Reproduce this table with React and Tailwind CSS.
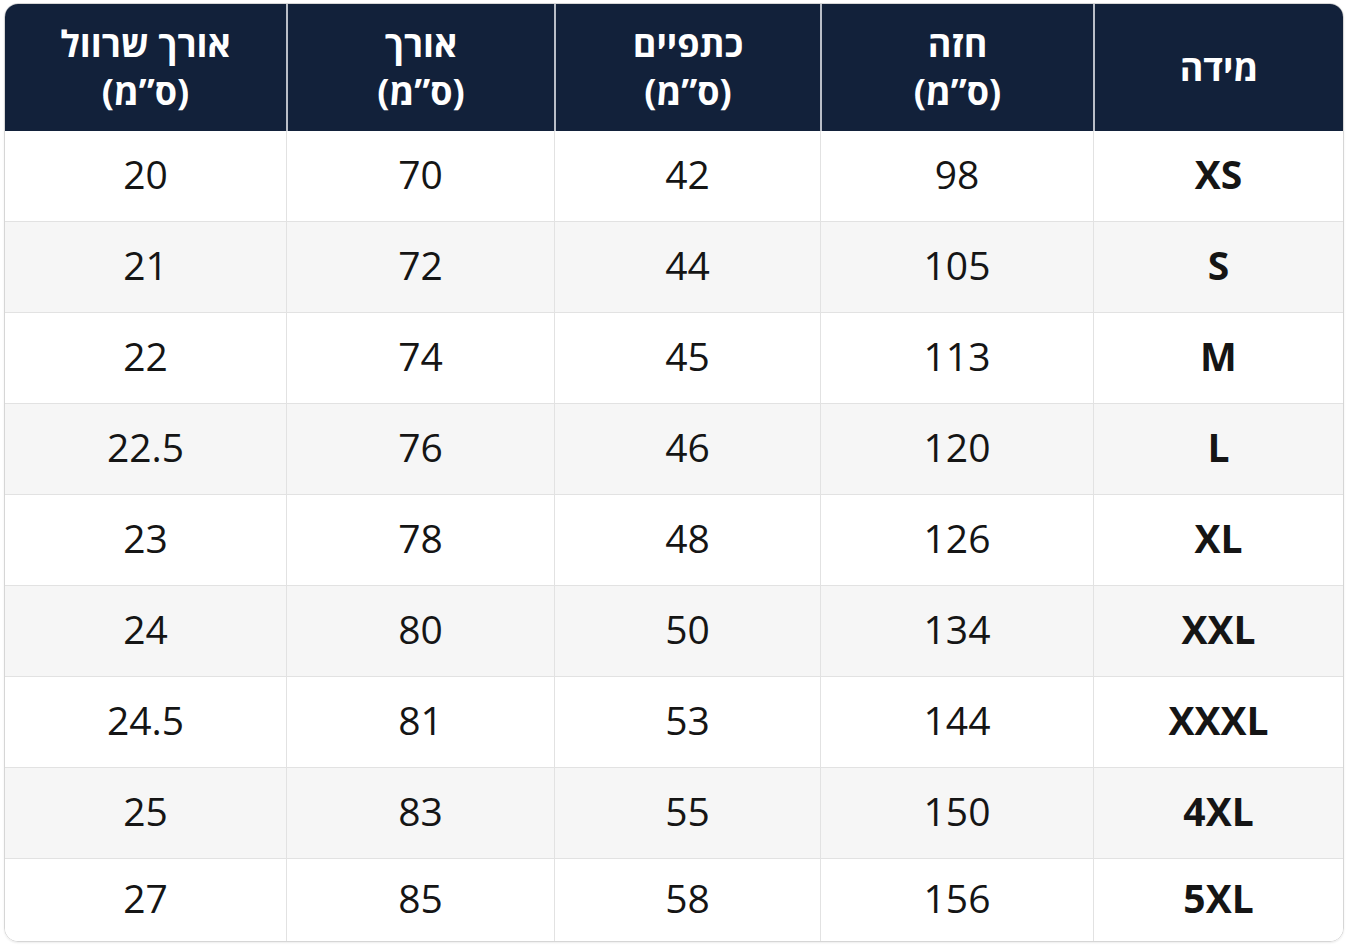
import React from 'react';

const headers = [
    ['מידה'],
    ['חזה', '(ס”מ)'],
    ['כתפיים', '(ס”מ)'],
    ['אורך', '(ס”מ)'],
    ['אורך שרוול', '(ס”מ)'],
];

const rows = [
    ['XS', '98', '42', '70', '20'],
    ['S', '105', '44', '72', '21'],
    ['M', '113', '45', '74', '22'],
    ['L', '120', '46', '76', '22.5'],
    ['XL', '126', '48', '78', '23'],
    ['XXL', '134', '50', '80', '24'],
    ['XXXL', '144', '53', '81', '24.5'],
    ['4XL', '150', '55', '83', '25'],
    ['5XL', '156', '58', '85', '27'],
];

const cols = 'grid grid-cols-[250px_273px_266px_268px_1fr]';

export default function App() {
    return (
        <div className="w-[1348px] h-[946px] bg-white pt-[3px] pl-[4px]" style={{ fontFamily: '"Open Sans", "Liberation Sans", "DejaVu Sans", sans-serif' }}>
            <div dir="rtl" className="w-[1340px] h-[939px] border border-[#d6d6d6] rounded-[14px] overflow-hidden flex flex-col shadow-[0_1px_2px_rgba(0,0,0,0.08)]">
                {/* כותרת */}
                <div className={`${cols} h-[127px] bg-[#12213a] text-white shrink-0`}>
                    {headers.map((h, i) => (
                        <div key={i} className={`flex flex-col items-center justify-center font-bold text-[36px] leading-[48px] ${i < 4 ? 'border-l-2 border-[#b9bec7]' : ''}`}>
                            {h.map((line, j) => <div key={j}>{line}</div>)}
                        </div>
                    ))}
                </div>

                {rows.map((r, ri) => (
                    <div key={ri} className={`${cols} ${ri === rows.length - 1 ? 'flex-1' : 'h-[91px] border-b border-[#e2e2e2]'} ${ri % 2 === 1 ? 'bg-[#f6f6f6]' : 'bg-white'}`}>
                        {r.map((c, ci) => (
                            <div key={ci} className={`flex items-center justify-center pb-[4px] text-[39px] text-[#151515] ${ci === 0 ? 'font-bold' : ''} ${ci < 4 ? 'border-l border-[#e2e2e2]' : ''}`}>
                                <span dir="ltr">{c}</span>
                            </div>
                        ))}
                    </div>
                ))}
            </div>
        </div>
    );
}
